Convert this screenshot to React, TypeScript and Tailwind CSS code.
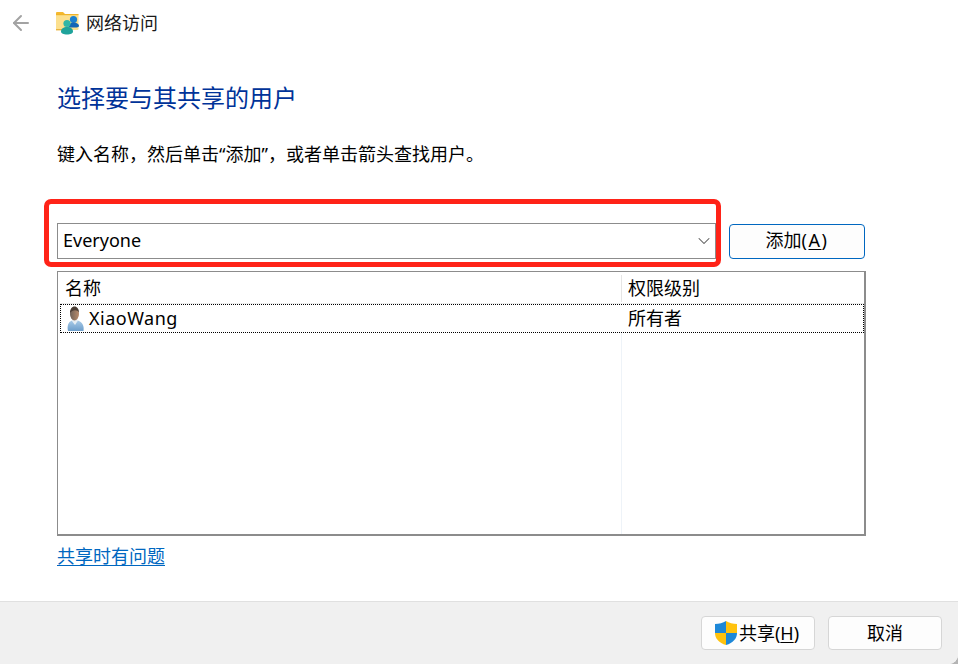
import { ArrowLeft, ChevronDown } from "lucide-react";

const font = "font-['Noto_Sans','Noto_Sans_CJK_SC',sans-serif]";

const FolderIcon = () => (
  <svg width="24" height="24" viewBox="0 0 24 24" className="shrink-0">
    <path d="M0 2a1 1 0 0 1 1-1h6l2.500 2.500H0z" fill="#f5b82e" />
    <rect x="0" y="3" width="22.500" height="16" rx="1" fill="#fce08e" />
    <rect x="0" y="3" width="22.500" height="1.200" fill="#f0b429" />
    <rect x="0" y="18" width="12" height="1.400" fill="#eab33c" />
    <circle cx="17.500" cy="8.500" r="3.600" fill="#1c80cf" />
    <path d="M12.500 16c0-3 2.500-4.500 5-4.500s5.500 1.500 5.500 3.300c0 1-1 1.700-2.500 1.700h-8z" fill="#1565b5" />
    <circle cx="11" cy="12.500" r="3.600" fill="#2fb6a6" />
    <path d="M5 20.500c0-3 2.500-4.500 6-4.500s6 1.500 6 4.500c0 1.800-2.500 3-6 3s-6-1.200-6-3z" fill="#1fa39b" />
  </svg>
);

const UserIcon = () => (
  <svg width="20" height="26" viewBox="0 0 20 26" className="shrink-0">
    <defs>
      <linearGradient id="body" x1="0" y1="0" x2="0" y2="1">
        <stop offset="0" stopColor="#a9cbe8" />
        <stop offset="1" stopColor="#6c9dca" />
      </linearGradient>
      <linearGradient id="face" x1="0" y1="0" x2="1" y2="0">
        <stop offset="0" stopColor="#6f6258" />
        <stop offset="1" stopColor="#b98c6c" />
      </linearGradient>
    </defs>
    <path d="M2 25c-1-5 0-9 4-10.500l3 1.500 3-1.500c4 1.500 6.500 5 5.500 10.500z" fill="url(#body)" />
    <path d="M5.500 14.500L9 19l3-4.500-1-1.500H7z" fill="#e6edf3" />
    <ellipse cx="8.500" cy="8" rx="4.500" ry="6.500" fill="url(#face)" />
    <path d="M4 7c0-4 2-6.500 4.500-6.500S13 3 13 6.500c-1-1.500-2-2.300-4-2.300S5 5.500 4 7z" fill="#4a3d34" />
  </svg>
);

const ShieldIcon = () => (
  <svg width="22" height="24" viewBox="0 0 22 24" className="shrink-0">
    <path d="M11 0C8 2 4 3 0 3v9h11z" fill="#1e88d8" />
    <path d="M11 0c3 2 7 3 11 3v9H11z" fill="#ffc20e" />
    <path d="M0 12h11v12C4 22 0 17.500 0 12z" fill="#ffc20e" />
    <path d="M11 12h11c0 5.500-4 10-11 12z" fill="#1e88d8" />
  </svg>
);

export default function App() {
  return (
    <div className="h-[664px] w-[958px] bg-[#b4b4b4]">
      <div className={`relative flex h-[664px] w-[958px] flex-col overflow-hidden rounded-br-[9px] bg-white text-[18px] text-black ${font}`}>
        {/* Title bar */}
        <div className="flex h-[46px] items-center pl-[9px]">
          <ArrowLeft className="h-[24px] w-[24px] text-[#a3a3a3]" strokeWidth={2} />
          <div className="ml-[23px] mr-[6px] flex items-center">
            <FolderIcon />
          </div>
          <span className="text-[#1a1a1a]">网络访问</span>
        </div>

        <div className="flex flex-1 flex-col pl-[57px] pr-[92px]">
          <h1 className="mt-[35px] text-[24px] leading-[34px] font-normal text-[#003399]">选择要与其共享的用户</h1>
          <p className="mt-[26px] leading-[26px]">键入名称，然后单击“添加”，或者单击箭头查找用户。</p>

          {/* Combo and add button */}
          <div className="mt-[56px] flex items-center gap-[13px]">
            <div className="flex h-[36px] w-[659px] items-center justify-between border border-[#8c8c8c] pb-[2px] pl-[5px] pr-[1px]">
              <span>Everyone</span>
              <ChevronDown className="mt-[2px] h-[20px] w-[20px] text-[#555555]" strokeWidth={1.25} />
            </div>
            <button className="h-[35px] w-[136px] rounded-[4px] border border-[#0067c0] bg-[#fdfdfd] pb-[2px] leading-none">
              添加<span className="tracking-[1.5px]">(<span className="underline underline-offset-2">A</span>)</span>
            </button>
          </div>

          {/* List view */}
          <div className="mt-[12px] flex h-[265px] w-[809px] flex-col border-2 border-t border-l border-[#8c8c8c] pl-[2px] pt-px">
            <div className="flex h-[31px] shrink-0 items-center border-b border-[#ececec] pr-[2px]">
              <span className="w-[562px] border-r border-[#e5e5e5] pl-[5px]">名称</span>
              <span className="pl-[6px]">权限级别</span>
            </div>
            <div className="flex h-[29px] shrink-0 items-center border border-dotted border-black pr-[2px]">
              <div className="flex w-[561px] items-center gap-[3px] pl-[5px]">
                <UserIcon />
                <span className="tracking-[0.5px]">XiaoWang</span>
              </div>
              <span className="pl-[6px]">所有者</span>
            </div>
            <div className="flex-1">
              <div className="h-full w-[562px] border-r border-[#eef3f8]" />
            </div>
          </div>

          <a className="mt-[7px] w-fit leading-[26px] text-[#0067c0] underline underline-offset-2">共享时有问题</a>
        </div>

        {/* Footer */}
        <div className="flex h-[63px] shrink-0 items-start justify-end gap-[13px] border-t border-[#e0e0e0] bg-[#f0f0f0] pt-[14px] pr-[16px]">
          <button className="flex h-[34px] w-[114px] items-center justify-center gap-[2px] rounded-[4px] border border-[#d6d6d6] bg-[#fdfdfd] pr-[2px]">
            <ShieldIcon />
            <span>共享(<span className="underline underline-offset-2">H</span>)</span>
          </button>
          <button className="h-[34px] w-[114px] rounded-[4px] border border-[#d6d6d6] bg-[#fdfdfd]">取消</button>
        </div>

        {/* Red annotation over the combo box */}
        <div className="absolute left-[44px] top-[199px] h-[68px] w-[677px] rounded-[7px] border-[5px] border-[#ff2318]" />
      </div>
    </div>
  );
}
